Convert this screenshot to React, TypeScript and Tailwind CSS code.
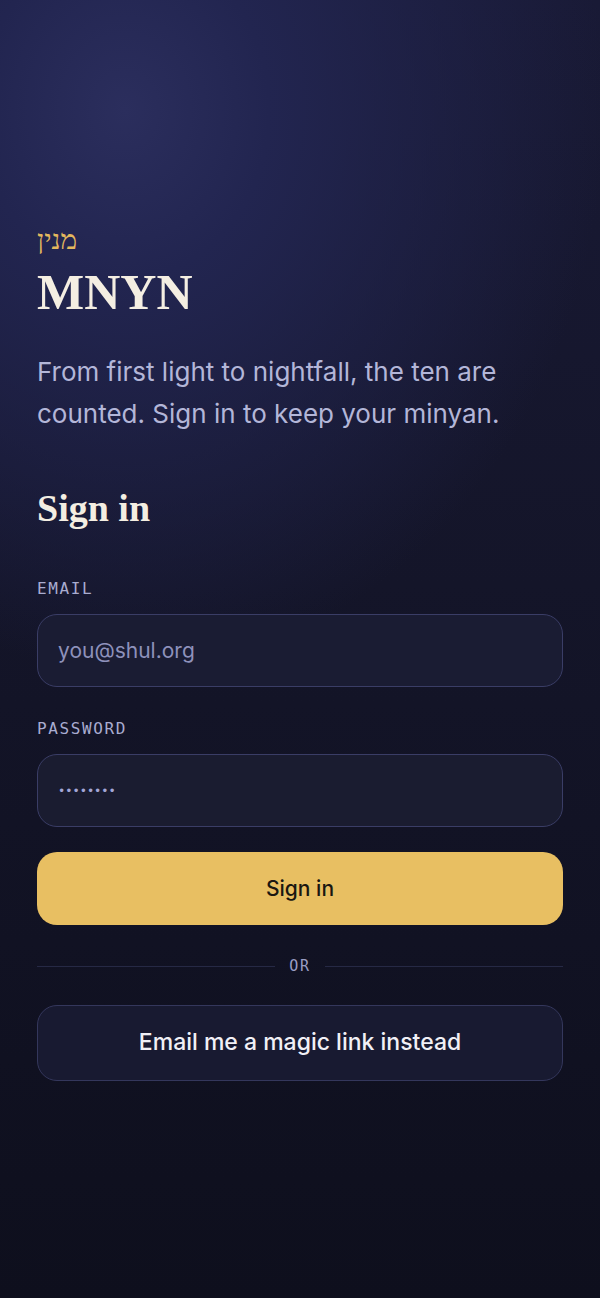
import { useState } from 'react';

// Fonts used throughout the sign-in card
const SERIF = "font-['Liberation_Serif','DejaVu_Serif',serif]";
const SANS = "font-['Inter','Noto_Sans',sans-serif]";
const MONO = "font-['DejaVu_Sans_Mono','Liberation_Mono',monospace]";

export default function App() {
  const [email, setEmail] = useState('');
  const [password, setPassword] = useState('password');

  return (
    <div
      className={`min-h-[1298px] w-full ${SANS} bg-[radial-gradient(ellipse_480px_560px_at_125px_110px,#2b2e5d_0%,#222550_30%,rgba(26,28,60,0)_100%),linear-gradient(180deg,#191a36_0%,#141529_45%,#0e0f1d_100%)]`}
    >
      <div className="px-[37px] pt-[222px] pb-16">
        {/* Brand */}
        <div className={`text-[28px] leading-[36px] text-[#e3b85e] ${SERIF}`}>
          <span dir="rtl">מנין</span>
        </div>
        <h1 className={`mt-[4px] text-[50px] leading-[60px] font-bold text-[#f4eee2] ${SERIF}`}>MNYN</h1>

        <p className="mt-[29px] text-[26px] leading-[42px] text-[#b3b6d8]">
          From first light to nightfall, the ten are counted. Sign in to keep your minyan.
        </p>

        <h2 className={`mt-[48px] text-[38px] leading-[50px] font-bold text-[#f4eee2] ${SERIF}`}>Sign in</h2>

        {/* Form */}
        <form className="mt-[45px] flex flex-col" onSubmit={(e) => e.preventDefault()}>
          <label className={`text-[16px] leading-[22px] tracking-[0.1em] text-[#a9acd0] ${MONO}`}>EMAIL</label>
          <input
            type="email"
            value={email}
            onChange={(e) => setEmail(e.target.value)}
            placeholder="you@shul.org"
            className="mt-[14px] h-[73px] rounded-[20px] border border-[#3a3d66] bg-[#1a1c33] px-[20px] text-[21px] text-[#d8daf0] placeholder:text-[#8e91bb] outline-none"
          />

          <label className={`mt-[31px] text-[16px] leading-[22px] tracking-[0.1em] text-[#a9acd0] ${MONO}`}>PASSWORD</label>
          <input
            type="password"
            value={password}
            onChange={(e) => setPassword(e.target.value)}
            className={`mt-[14px] h-[73px] rounded-[20px] border border-[#3a3d66] bg-[#1a1c30] px-[20px] text-[12px] tracking-[0px] text-[#a3a6d6] outline-none ${MONO}`}
          />

          <button
            type="submit"
            className="mt-[25px] h-[73px] rounded-[20px] bg-[#e8bf62] text-[21px] font-medium text-[#1a1711]"
          >
            Sign in
          </button>

          {/* Divider */}
          <div className="mt-[30px] flex items-center gap-[14px]">
            <div className="h-px flex-1 bg-[#262945]" />
            <span className={`text-[15px] tracking-[0.12em] text-[#9a9dc4] ${MONO}`}>OR</span>
            <div className="h-px flex-1 bg-[#262945]" />
          </div>

          <button
            type="button"
            className="mt-[27px] h-[76px] rounded-[20px] border border-[#34375c] bg-[#181a31] text-[23px] font-medium text-[#f1f0f6]"
          >
            Email me a magic link instead
          </button>
        </form>
      </div>
    </div>
  );
}
